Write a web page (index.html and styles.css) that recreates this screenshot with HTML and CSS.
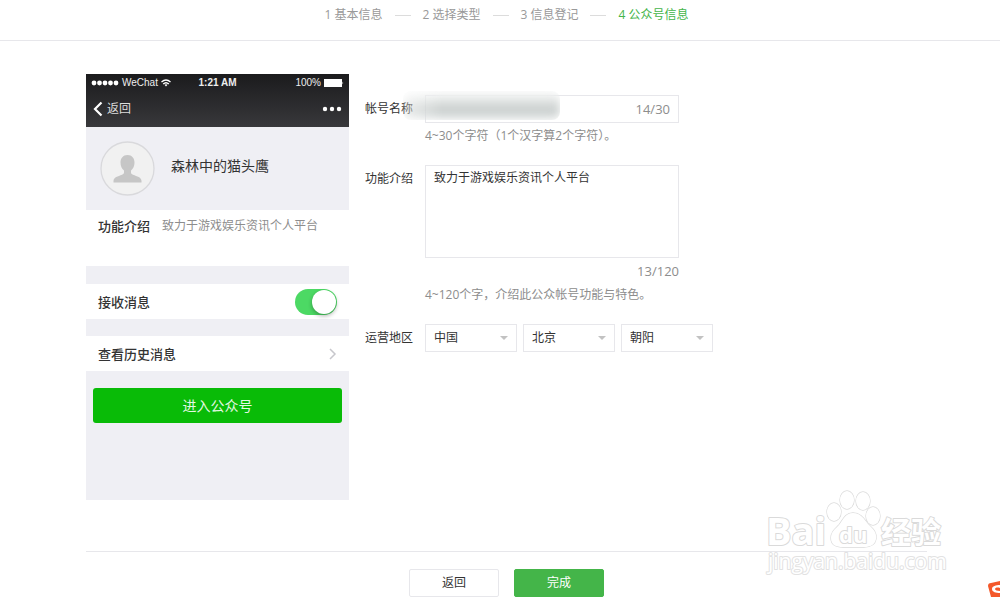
FILE: index.html
```html
<!DOCTYPE html>
<html lang="zh-CN">
<head>
    <meta charset="UTF-8">
    <meta name="viewport" content="width=device-width, initial-scale=1.0">
    <title>公众号信息</title>
    <link rel="stylesheet" href="styles.css">
</head>
<body>
    <header class="header">
        <ol class="steps">
            <li class="step">1 基本信息</li>
            <li class="step">2 选择类型</li>
            <li class="step">3 信息登记</li>
            <li class="step current">4 公众号信息</li>
        </ol>
    </header>

    <main class="container">
        <div class="content">
            <section class="phone">
                <div class="phone-head">
                    <div class="status">
                        <span class="carrier">
                            <svg width="28" height="6" viewBox="0 0 28 6" fill="#fff">
                                <circle cx="3" cy="3" r="2.4"/><circle cx="8.5" cy="3" r="2.4"/><circle cx="14" cy="3" r="2.4"/><circle cx="19.5" cy="3" r="2.4"/><circle cx="25" cy="3" r="2.4"/>
                            </svg>
                            WeChat
                            <svg width="10" height="8" viewBox="0 0 10 8" fill="none" stroke="#fff" stroke-width="1.3">
                                <path d="M.5 3Q5-1 9.5 3M2.2 5Q5 2.4 7.8 5"/><path d="M3.5 5.8Q5 4.5 6.5 5.8L5 7.5z" fill="#fff" stroke="none"/>
                            </svg>
                        </span>
                        <span class="time">1:21 AM</span>
                        <span class="battery">
                            100%
                            <svg width="20" height="8" viewBox="0 0 20 8" fill="#fff"><path d="M0 0h18v8H0zM18.5 2.5q1.5 1.5 0 3z"/></svg>
                        </span>
                    </div>
                    <div class="nav">
                        <button type="button" class="nav-back">
                            <svg width="10" height="16" viewBox="0 0 10 16" fill="none" stroke="#fff" stroke-width="2.2"><path d="M8.5 1.5L2 8l6.5 6.5"/></svg>
                            返回
                        </button>
                        <svg width="20" height="6" viewBox="0 0 20 6" fill="#fff"><circle cx="3" cy="3" r="2.2"/><circle cx="10" cy="3" r="2.2"/><circle cx="17" cy="3" r="2.2"/></svg>
                    </div>
                </div>
                <div class="profile">
                    <svg width="55" height="55" viewBox="0 0 55 55">
                        <circle cx="27.5" cy="27.5" r="26.5" fill="#f1f1f1" stroke="#d9d9dc" stroke-width="1.3"/>
                        <path d="M27.5 14c4.500 0 7 3.200 7 7.500 0 3.400-1.300 6.500-3.500 8v2c0 1 .7 1.600 2 2.200 4 1.600 8.500 2.600 8.500 6.300v1.500h-28V40c0-3.700 4.500-4.700 8.500-6.300 1.300-.6 2-1.200 2-2.200v-2c-2.200-1.500-3.500-4.600-3.500-8 0-4.300 2.500-7.500 7-7.500z" fill="#c6c6c6"/>
                    </svg>
                    <span class="nickname">森林中的猫头鹰</span>
                </div>
                <div class="intro">
                    <span class="row-title">功能介绍</span>
                    <span class="intro-text">致力于游戏娱乐资讯个人平台</span>
                </div>
                <label class="row">
                    <span class="row-title">接收消息</span>
                    <input type="checkbox" class="switch" checked>
                </label>
                <div class="row">
                    <a class="row-title" href="#">查看历史消息</a>
                    <svg width="8" height="12" viewBox="0 0 8 12" fill="none" stroke="#c7c7cc" stroke-width="1.5"><path d="M1 1l5 5-5 5"/></svg>
                </div>
                <button type="button" class="enter">进入公众号</button>
            </section>

            <form class="form" id="infoForm">
                <div class="form-group name-group">
                    <label class="label" for="name">帐号名称</label>
                    <div class="field">
                        <div class="input-box">
                            <input type="text" id="name">
                            <span class="count">14/30</span>
                        </div>
                        <p class="hint">4~30个字符（1个汉字算2个字符）。</p>
                    </div>
                    <div class="smudge"></div>
                </div>
                <div class="form-group">
                    <label class="label" for="intro">功能介绍</label>
                    <div class="field">
                        <textarea id="intro">致力于游戏娱乐资讯个人平台</textarea>
                        <div class="count below">13/120</div>
                        <p class="hint">4~120个字，介绍此公众帐号功能与特色。</p>
                    </div>
                </div>
                <div class="form-group">
                    <label class="label" for="country">运营地区</label>
                    <div class="selects">
                        <span class="select"><select id="country"><option>中国</option></select></span>
                        <span class="select"><select aria-label="省份"><option>北京</option></select></span>
                        <span class="select"><select aria-label="城市"><option>朝阳</option></select></span>
                    </div>
                </div>
            </form>
        </div>

        <div class="actions">
            <button type="button" class="btn">返回</button>
            <button type="submit" class="btn primary" form="infoForm">完成</button>
        </div>
    </main>

    <svg class="watermark" width="190" height="96" viewBox="0 0 190 96">
        <text class="wm-logo" x="6" y="60" font-size="38">Bai</text>
        <g fill="#fff" stroke="#dadada" stroke-width="1.3">
            <ellipse cx="74" cy="27" rx="7" ry="9"/>
            <ellipse cx="87" cy="15" rx="7" ry="9"/>
            <ellipse cx="103" cy="16" rx="7" ry="9"/>
            <ellipse cx="113" cy="31" rx="7" ry="9"/>
            <path d="M93 28c8 0 11 6 15 11 5 5 9 8 8 15-1 6-6 8-12 8H83c-7 0-12-2-12-9 0-6 4-9 8-13 4-5 6-12 14-12z"/>
        </g>
        <text class="wm-logo" x="79" y="58" font-size="22">du</text>
        <text class="wm-cn" x="121" y="58" font-size="30">经验</text>
        <text class="wm-url" x="8" y="84" font-size="21">jingyan.baidu.com</text>
    </svg>

    <svg class="corner" width="12" height="16" viewBox="0 0 12 16">
        <path d="M0 5Q0 2 3 2L12 0v16H3z" fill="#f4582a"/>
        <path d="M12 4C8 4 4 5 4 8s4 4 8 4v-2c-3 0-5-1-5-2s2-2 5-1z" fill="#fff"/>
    </svg>
</body>
</html>
```
FILE: styles.css
```css
* {
    box-sizing: border-box;
}
body {
    margin: 0;
    background-color: #fff;
    color: #333;
    font-family: "Open Sans", "Noto Sans CJK SC", sans-serif;
    font-size: 12px;
    line-height: 18px;
}
input, textarea, select, button {
    font: inherit;
    color: inherit;
}
p {
    margin: 0;
}
.header {
    height: 41px;
    padding: 6px 73px 0 86px;
    border-bottom: 1px solid #e7e7eb;
}
.steps {
    display: flex;
    justify-content: center;
    margin: 0;
    padding: 0;
    list-style: none;
    color: #999;
}
.step {
    display: flex;
    align-items: center;
    white-space: pre;
}
.step + .step::before {
    content: "";
    width: 16px;
    height: 1px;
    margin: 0 12px;
    background-color: #dcdcdc;
}
.current {
    color: #44b549;
}
.container {
    margin: 33px 73px 0 86px;
}
.content {
    display: flex;
    align-items: flex-start;
    gap: 16px;
    padding-bottom: 51px;
    border-bottom: 1px solid #e7e7eb;
}

/* phone preview */
.phone {
    flex: 0 0 263px;
    padding-bottom: 77px;
    background-color: #efeff4;
}
.phone-head {
    height: 53px;
    background: linear-gradient(#1b1b1d, #38383b);
    color: #eee;
}
.status {
    display: grid;
    grid-template-columns: 1fr auto 1fr;
    align-items: center;
    padding: 0 5px;
    font-family: "Liberation Sans", Arial, sans-serif;
    font-size: 10px;
}
.carrier, .battery {
    display: flex;
    align-items: center;
    gap: 3px;
}
.battery {
    justify-content: flex-end;
}
.time {
    font-weight: bold;
}
.nav {
    display: flex;
    align-items: center;
    justify-content: space-between;
    height: 34px;
    padding: 0 7px;
}
.nav-back {
    display: flex;
    align-items: center;
    gap: 4px;
    padding: 0;
    border: none;
    background: none;
    color: #ddd;
}
.profile {
    display: flex;
    align-items: center;
    gap: 16px;
    height: 83px;
    padding-left: 14px;
}
.nickname {
    padding-bottom: 6px;
    font-size: 14px;
}
.intro {
    display: flex;
    gap: 12px;
    height: 56px;
    padding: 7px 12px;
    background-color: #fff;
}
.row-title {
    color: #333;
    font-size: 13px;
    font-weight: 500;
    text-decoration: none;
}
.intro-text {
    color: #8d8d8d;
}
.row {
    display: flex;
    align-items: center;
    justify-content: space-between;
    height: 35px;
    margin-top: 18px;
    padding: 0 12px;
    background-color: #fff;
}
.row + .row {
    margin-top: 17px;
}
.switch {
    appearance: none;
    display: flex;
    justify-content: flex-end;
    width: 42px;
    height: 26px;
    margin: 0;
    padding: 1px;
    border-radius: 13px;
    background-color: #4cd964;
}
.switch::before {
    content: "";
    width: 24px;
    height: 24px;
    border-radius: 50%;
    background-color: #fff;
    box-shadow: 0 2px 4px rgba(0, 0, 0, 0.3);
}
.enter {
    display: block;
    width: calc(100% - 14px);
    height: 35px;
    margin: 17px 7px 0;
    padding: 0;
    border: none;
    border-radius: 3px;
    background-color: #09bb07;
    color: #e4f8e4;
    font-size: 14px;
}

/* form */
.form {
    flex: 1;
    padding-top: 21px;
}
.form-group {
    display: flex;
    margin-bottom: 20px;
}
.name-group {
    position: relative;
}
.label {
    flex: 0 0 60px;
    padding-top: 5px;
}
.field {
    flex: 0 1 254px;
}
.input-box {
    display: flex;
    align-items: center;
    height: 28px;
    padding: 0 8px;
    border: 1px solid #e7e7eb;
}
.input-box input {
    flex: 1;
    min-width: 0;
    padding: 0;
    border: none;
    outline: none;
    background: none;
}
.count {
    color: #8d8d8d;
    font-size: 13px;
}
.below {
    padding: 4px 0 2px;
    text-align: right;
}
.hint {
    padding-top: 4px;
    color: #8d8d8d;
}
textarea {
    display: block;
    width: 100%;
    height: 93px;
    padding: 3px 8px;
    border: 1px solid #e7e7eb;
    outline: none;
    resize: none;
}
.selects {
    display: flex;
    gap: 6px;
}
.select {
    position: relative;
    width: 92px;
}
.select::after {
    content: "";
    position: absolute;
    top: 12px;
    right: 9px;
    border: 4px solid transparent;
    border-top-color: #c2c2c2;
    pointer-events: none;
}
select {
    appearance: none;
    width: 100%;
    height: 28px;
    padding: 0 8px;
    border: 1px solid #e7e7eb;
    border-radius: 0;
    background-color: #fff;
}
.smudge {
    position: absolute;
    top: -4px;
    left: 38px;
    width: 157px;
    height: 29px;
    border-radius: 8px;
    background: linear-gradient(rgba(255, 255, 255, 0.9), #d4d8d7 50%, #c6cccb 75%, #f4f5f5);
    -webkit-mask-image: linear-gradient(to right, rgba(0, 0, 0, 0.4), #000 25%);
    mask-image: linear-gradient(to right, rgba(0, 0, 0, 0.4), #000 25%);
    filter: blur(4px);
    pointer-events: none;
}

/* footer */
.actions {
    display: flex;
    justify-content: center;
    gap: 15px;
    padding-top: 17px;
}
.btn {
    width: 90px;
    height: 28px;
    padding: 0;
    border: 1px solid #e7e7eb;
    border-radius: 2px;
    background-color: #fff;
}
.primary {
    border-color: #44b549;
    background-color: #44b549;
    color: #fff;
}
.watermark {
    position: absolute;
    right: 50px;
    bottom: 16px;
    fill: #fff;
    stroke: #dadada;
    stroke-width: 2px;
    stroke-linejoin: round;
    paint-order: stroke;
    pointer-events: none;
}
.wm-logo {
    font-family: "Open Sans", sans-serif;
    font-weight: bold;
}
.wm-cn {
    font-family: "Noto Sans CJK SC", sans-serif;
    font-weight: bold;
}
.wm-url {
    font-family: "Open Sans", sans-serif;
    stroke: #e2e2e2;
}
.corner {
    position: fixed;
    right: 0;
    bottom: 0;
}
```
